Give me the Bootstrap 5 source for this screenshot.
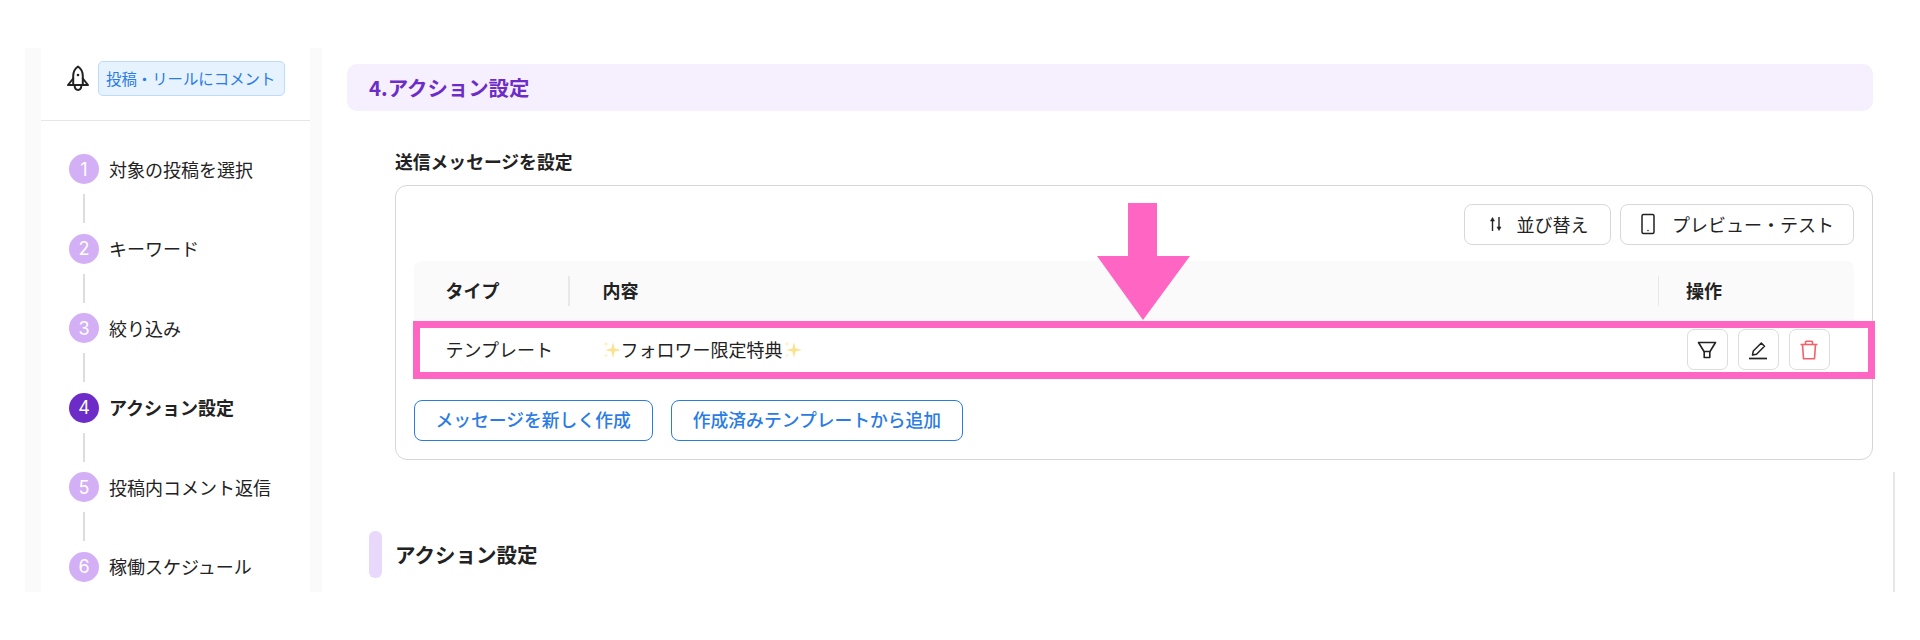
<!DOCTYPE html>
<html lang="ja">
<head>
<meta charset="UTF-8">
<title>アクション設定</title>
<link href="https://cdn.jsdelivr.net/npm/bootstrap@5.3.0/dist/css/bootstrap.min.css" rel="stylesheet">
<style>
body { background: #fff; color: #222; font-family: "Noto Sans CJK JP", "Noto Sans", sans-serif; font-size: 18px; overflow: hidden; }
.frame { height: 544px; margin: 48px 0 0 25px; position: relative; overflow: hidden; }
.side-strip { width: 297px; background: #fafafa; padding: 0 12px 0 16px; flex: none; }
.side-inner { background: #fff; height: 100%; }
.side-head { height: 73px; padding: 13px 0 0 25px; border-bottom: 1px solid #e6e6e6; }
.type-tag { height: 35px; width: 187px; padding: 0 7px; background: #e6f2fe; border: 1px solid #bcdcfa; border-radius: 5px; color: #2a7be4; font-size: 15.4px; line-height: 33px; white-space: nowrap; }
.step-list { padding: 33px 0 0 28px; }
.step-row { gap: 10px; }
.step-num { width: 30px; height: 30px; border-radius: 50%; background: #d3aff5; color: #fff; font-family: "Inter", sans-serif; font-size: 18px; }
.step-on .step-num { background: #6d2cc7; }
.step-on .step-name { font-weight: 700; }
.step-line { width: 2px; height: 29px; background: #ddd; margin: 10px 0 10.5px 14px; }
.main-area { margin-left: 25px; width: 1526px; flex: none; }
.sec-bar { height: 47px; margin-top: 16px; padding-left: 22px; background: #f6effd; border-radius: 10px; color: #6d2cc7; font-size: 20.4px; font-weight: 700; line-height: 47px; }
.msg-block { margin: 0 0 0 48px; }
.msg-label { font-weight: 700; line-height: 26px; margin: 37px 0 11px; font-size: 17.8px; }
.msg-card { height: 275px; border: 1.5px solid #d6d6d6; border-radius: 12px; padding: 17.5px 18px 0 17.5px; }
.tool-row { gap: 9px; }
.btn-plain { height: 41px; padding: 0 18px; background: #fff; border: 1.5px solid #d8d8d8; border-radius: 8px; color: #222; font-size: 18px; line-height: 1; }
.btn-sort { width: 147px; }
.btn-preview { width: 234px; }
.msg-head { height: 60px; margin-top: 16px; background: #fafafa; border-radius: 8px 8px 0 0; font-weight: 700; }
.col-type { width: 189px; padding: 0 33px 0 32px; flex: none; }
.col-body { flex: 1; padding-right: 27px; }
.col-ops { width: 168px; flex: none; }
.col-sep { width: 1.5px; height: 30px; background: #e8e8e8; }
.msg-row { height: 58px; margin: 0 -20.5px 0 -1px; border: 7px solid #ff66c4; }
.row-type { width: 182px; padding-left: 26px; flex: none; }
.row-ops { width: 181px; flex: none; gap: 10px; }
.btn-op { width: 41px; height: 41px; padding: 0; background: #fff; border: 1.5px solid #dcdcdc; border-radius: 7px; }
.msg-actions { margin-top: 21px; gap: 18px; }
.btn-add { height: 41px; padding: 0 21px; background: #fff; border: 1.5px solid #2a7be4; border-radius: 8px; color: #2a7be4; font-size: 17.8px; font-weight: 500; line-height: 1; white-space: nowrap; }
.sub-head { margin-top: 71px; height: 47px; margin-left: 22px; gap: 13px; }
.sub-mark { width: 13px; height: 47px; border-radius: 6px; background: #e8d8fb; }
.sub-name { font-size: 20.5px; font-weight: 700; }
.pink-arrow { position: absolute; left: 1072px; top: 155px; }
.scroll-mark { position: absolute; left: 1868px; top: 424px; width: 2px; height: 120px; background: #e6e6e6; }
</style>
</head>
<body>
<div class="frame d-flex">
  <div class="side-strip">
    <div class="side-inner">
      <div class="side-head d-flex align-items-start gap-2">
        <svg class="mt-1" width="24" height="28" viewBox="0 0 24 28" fill="none" stroke="#222" stroke-width="2" stroke-linejoin="round" stroke-linecap="round">
          <path d="M12 1.500c3.200 2.200 4.800 5.500 4.800 9.500v9H7.200v-9c0-4 1.600-7.300 4.800-9.500z"/>
          <path d="M7.200 13.500L2 20h20l-5.200-6.500"/>
          <path d="M8.500 20c.2 3 1.500 5 3.500 5s3.300-2 3.500-5"/>
          <circle cx="12" cy="10" r="1.300" fill="#222" stroke="none"/>
        </svg>
        <div class="type-tag">投稿・リールにコメント</div>
      </div>
      <div class="step-list">
        <div class="step-row d-flex align-items-center"><span class="step-num d-flex align-items-center justify-content-center">1</span><span class="step-name">対象の投稿を選択</span></div>
        <div class="step-line"></div>
        <div class="step-row d-flex align-items-center"><span class="step-num d-flex align-items-center justify-content-center">2</span><span class="step-name">キーワード</span></div>
        <div class="step-line"></div>
        <div class="step-row d-flex align-items-center"><span class="step-num d-flex align-items-center justify-content-center">3</span><span class="step-name">絞り込み</span></div>
        <div class="step-line"></div>
        <div class="step-row step-on d-flex align-items-center"><span class="step-num d-flex align-items-center justify-content-center">4</span><span class="step-name">アクション設定</span></div>
        <div class="step-line"></div>
        <div class="step-row d-flex align-items-center"><span class="step-num d-flex align-items-center justify-content-center">5</span><span class="step-name">投稿内コメント返信</span></div>
        <div class="step-line"></div>
        <div class="step-row d-flex align-items-center"><span class="step-num d-flex align-items-center justify-content-center">6</span><span class="step-name">稼働スケジュール</span></div>
      </div>
    </div>
  </div>

  <div class="main-area">
    <div class="sec-bar">4.アクション設定</div>
    <div class="msg-block">
      <div class="msg-label">送信メッセージを設定</div>
      <div class="msg-card">
        <div class="tool-row d-flex justify-content-end">
          <button class="btn btn-plain btn-sort d-flex align-items-center justify-content-center gap-2" type="button">
            <svg width="18" height="18" viewBox="0 0 18 18" fill="#222" stroke="#222" stroke-width="1.400"><path d="M5.500 16V5" fill="none"/><path d="M3.500 6L5.500 2.500 7.500 6z" stroke-width=".6"/><path d="M12 2v11" fill="none"/><path d="M10 12l2 3.500 2-3.500z" stroke-width=".6"/></svg>
            <span class="ms-1">並び替え</span>
          </button>
          <button class="btn btn-plain btn-preview d-flex align-items-center justify-content-center gap-2" type="button">
            <svg width="16" height="22" viewBox="0 0 16 22" fill="none" stroke="#222" stroke-width="1.500"><rect x="2" y="1.500" width="12" height="19" rx="1.500"/><circle cx="8" cy="17.500" r=".8" fill="#222" stroke="none"/></svg>
            <span class="ms-2">プレビュー・テスト</span>
          </button>
        </div>
        <div class="msg-head d-flex align-items-center">
          <div class="col-type d-flex align-items-center justify-content-between"><span>タイプ</span><span class="col-sep"></span></div>
          <div class="col-body d-flex align-items-center justify-content-between"><span>内容</span><span class="col-sep"></span></div>
          <div class="col-ops">操作</div>
        </div>
        <div class="msg-row d-flex align-items-center">
          <div class="row-type">テンプレート</div>
          <div class="flex-grow-1 d-flex align-items-center">
            <svg width="19" height="20" viewBox="0 0 19 20"><path d="M11 2l1.600 6.400L19 10l-6.400 1.600L11 18l-1.600-6.400L3 10l6.400-1.600z" fill="#fbe38e"/><path d="M4 1l.7 2.300L7 4l-2.300.7L4 7l-.7-2.300L1 4l2.300-.7z" fill="#fdf0c2"/><path d="M4 13l.6 1.900 1.900.6-1.900.6L4 18l-.6-1.900-1.900-.6 1.900-.6z" fill="#fdf0c2"/></svg>
            <span>フォロワー限定特典</span>
            <svg width="19" height="20" viewBox="0 0 19 20"><path d="M11 2l1.600 6.400L19 10l-6.400 1.600L11 18l-1.600-6.400L3 10l6.400-1.600z" fill="#fbe38e"/><path d="M4 1l.7 2.300L7 4l-2.300.7L4 7l-.7-2.300L1 4l2.300-.7z" fill="#fdf0c2"/><path d="M4 13l.6 1.900 1.900.6-1.900.6L4 18l-.6-1.900-1.900-.6 1.900-.6z" fill="#fdf0c2"/></svg>
          </div>
          <div class="row-ops d-flex align-items-center">
            <button class="btn btn-op d-flex align-items-center justify-content-center" type="button">
              <svg width="20" height="20" viewBox="0 0 20 20" fill="none" stroke="#222" stroke-width="1.600" stroke-linejoin="round"><path d="M1.500 2.500h17L13 11.500H7z"/><path d="M7.200 11.500v6h5.600v-6"/></svg>
            </button>
            <button class="btn btn-op d-flex align-items-center justify-content-center" type="button">
              <svg width="20" height="20" viewBox="0 0 20 20" fill="none" stroke="#222" stroke-width="1.500" stroke-linejoin="round"><path d="M4.500 15l.8-4 8-8 3.200 3.200-8 8z"/><path d="M1 18.500h18" stroke-width="1.700"/></svg>
            </button>
            <button class="btn btn-op d-flex align-items-center justify-content-center" type="button">
              <svg width="20" height="20" viewBox="0 0 20 20" fill="none" stroke="#f4606a" stroke-width="1.600" stroke-linejoin="round"><path d="M1.500 4.500h17"/><path d="M6.500 4.500V2c0-.5.300-.8.800-.8h5.400c.5 0 .8.300.8.800v2.500"/><path d="M3.500 4.500l1 14.300h11l1-14.300"/></svg>
            </button>
          </div>
        </div>
        <div class="msg-actions d-flex">
          <button class="btn btn-add" type="button">メッセージを新しく作成</button>
          <button class="btn btn-add" type="button">作成済みテンプレートから追加</button>
        </div>
      </div>
    </div>
    <div class="sub-head d-flex align-items-center">
      <span class="sub-mark"></span>
      <span class="sub-name">アクション設定</span>
    </div>
  </div>

  <svg class="pink-arrow" width="94" height="118" viewBox="0 0 94 118"><path d="M31 0h29v53h33l-47 64-46-64h31z" fill="#ff66c4"/></svg>
  <span class="scroll-mark"></span>
</div>
<script src="https://cdn.jsdelivr.net/npm/bootstrap@5.3.0/dist/js/bootstrap.bundle.min.js"></script>
</body>
</html>
